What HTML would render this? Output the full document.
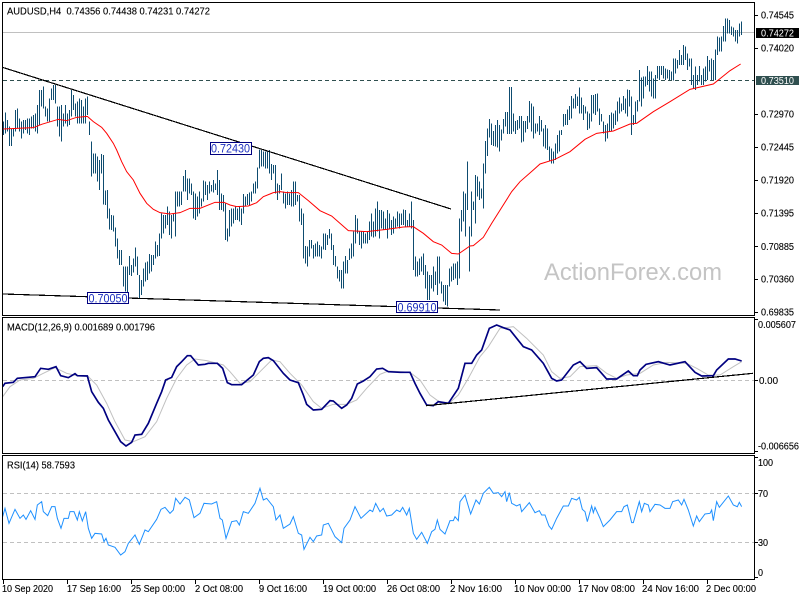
<!DOCTYPE html>
<html><head><meta charset="utf-8"><title>AUDUSD,H4</title>
<style>
html,body{margin:0;padding:0;background:#fff;width:800px;height:600px;overflow:hidden}
svg{display:block}
text{font-family:"Liberation Sans",sans-serif;font-size:10px;fill:#000;stroke:#000;stroke-width:.12}
.bars{fill:none;stroke:#0e4c70;stroke-width:3;shape-rendering:crispEdges}
.red{fill:none;stroke:#f00;stroke-width:3}
.macd{fill:none;stroke:#000080;stroke-width:5}
.sig{fill:none;stroke:#c0c0c0;stroke-width:3}
.rsi{fill:none;stroke:#1e90ff;stroke-width:3}
.f{stroke:#000;stroke-width:1;shape-rendering:crispEdges;fill:none}
.tl{stroke:#000;stroke-width:1.2;fill:none;shape-rendering:crispEdges}
text.lab{fill:#1c30c0;font-size:11.5px;stroke:none}
.box{fill:#fff;stroke:#000080;stroke-width:1;shape-rendering:crispEdges}
</style></head><body>
<svg xmlns="http://www.w3.org/2000/svg" width="800" height="600" viewBox="0 0 800 600">
<rect width="800" height="600" fill="#fff"/>

<!-- price line and dashed level -->
<path d="M3 32.5H754" stroke="#c0c0c0" stroke-width="1" shape-rendering="crispEdges"/>
<path d="M3 80.5H754" stroke="#2f4f4f" stroke-width="1" stroke-dasharray="4 3" shape-rendering="crispEdges"/>

<!-- bars -->
<g transform="translate(0,0) scale(.33333)"><path class="bars" d="M10 365V405M16 338V400M22 360V395M28 380V438M34 385V438M40 385V410M46 330V395M52 325V385M58 355V395M64 365V415M70 360V400M76 360V390M82 355V400M88 355V405M94 350V385M100 345V385M106 340V395M112 315V400M118 270V375M124 270V320M130 260V325M136 320V350M142 325V365M148 295V365M154 265V300M160 255V300M166 255V310M172 320V380M178 320V410M184 315V425M190 340V380M196 315V370M202 340V380M208 330V375M214 270V350M220 285V330M226 310V350M232 305V370M238 295V370M244 300V370M250 320V370M256 295V370M262 290V345M268 365V405M274 425V480M280 465V490M286 460V490M292 470V500M298 480V520M304 462V490M778 448V480M784 450V480M790 455V480M796 458V480M802 455V480M808 458V490"/></g>
<g transform="translate(0,150) scale(.33333)"><path class="bars" d="M274 0V80M280 10V70M286 10V70M292 20V95M298 35V120M304 12V70M310 15V163M316 122V165M322 120V205M328 175V238M334 195V240M340 197V245M346 232V290M352 265V325M358 300V345M364 300V345M370 350V410M376 350V425M382 350V430M388 318V375M394 345V378M400 325V368M406 292V350M412 320V375M418 375V445M424 390V435M430 355V410M436 338V395M442 335V390M448 312V370M454 315V365M460 315V345M466 275V325M472 285V320M478 250V318M484 190V265M490 195V250M496 195V235M502 170V225M508 185V255M514 195V265M520 190V215M526 125V260M532 125V170M538 125V170M544 125V165M550 78V125M556 60V125M562 85V150M568 85V130M574 100V135M580 125V205M586 130V210M592 140V200M598 125V190M604 145V170M610 92V155M616 95V135M622 105V150M628 95V130M634 105V125M640 90V128M646 100V120M652 60V135M658 90V180M664 130V180M670 135V185M676 160V270M682 235V275M688 180V260M694 175V230M700 175V220M706 170V210M712 175V210M718 170V215M724 175V225M730 132V190M736 140V170M742 132V165M748 128V165M754 125V155M760 100V130M766 95V130M772 52V115M778 0V55M784 0V50M790 5V50M796 5V55M802 10V55M808 0V70"/></g>
<g transform="translate(270,150) scale(.33333)"><path class="bars" d="M4 42V90M10 45V70M16 45V130M22 100V150M28 105V130M34 70V120M40 125V160M46 130V175M52 125V165M58 130V165M64 120V170M70 95V170M76 95V165M82 135V155M88 135V215M94 175V225M100 190V325M106 288V340M112 290V350M118 270V320M124 270V295M130 285V325M136 280V320M142 275V320M148 285V320M154 290V325M160 250V298M166 250V300M172 255V285M178 237V265M184 250V300M190 285V345M196 318V350M202 350V385M208 360V395M214 360V415M220 335V415M226 318V370M232 330V370M238 295V330M244 280V325M250 245V320M256 195V280M262 205V250M268 245V285M274 245V295M280 245V280M286 250V280M292 245V280M298 215V270M304 190V260M310 215V262M316 175V260M322 155V245M328 180V265M334 180V235M340 185V240M346 205V240M352 180V265M358 190V235M364 210V255M370 200V250M376 205V235M382 185V230M388 190V235M394 190V225M400 178V225M406 180V230M412 210V230M418 190V230M424 155V235M430 210V360M436 320V380M442 335V380M448 325V375M454 320V365M460 310V375M466 345V415M472 365V450M478 375V450M484 375V415M490 350V425M496 365V405M502 320V435M508 320V400M514 395V430M520 405V455M526 405V465M532 405V470M538 355V410M544 350V395M550 340V390M556 340V385M562 335V405M568 205V385M574 180V245M580 125V215M586 130V260M592 35V180M598 230V365M604 125V260M610 155V180M616 75V220M622 80V140M628 95V150M634 115V145M640 40V175M646 0V70"/></g>
<g transform="translate(270,0) scale(.33333)"><path class="bars" d="M646 423V480M652 385V468M658 357V413M664 370V435M670 393V438M676 375V440M682 360V443M688 375V455M694 388V422M700 357V400M706 336V380M712 336V402M718 261V402M724 261V402M730 340V395M736 363V402M742 360V390M748 348V385M754 348V428M760 363V425M766 363V398M772 348V387M778 303V368"/></g>
<g transform="translate(530,0) scale(.33333)"><path class="bars" d="M4 310V395M10 320V415M16 370V400M22 370V395M28 348V405M34 360V395M40 385V440M46 375V445M52 385V450M58 440V485M64 445V490M70 455V490M76 430V480M82 405V460M88 392V455M94 390V405M100 342V380M106 342V375M112 328V375M118 318V360M124 288V355M130 295V325M136 282V325M142 290V318M148 262V340M154 292V340M160 315V360M166 320V340M172 335V390M178 340V385M184 285V365M190 285V340M196 282V345M202 280V335M208 325V375M214 342V365M220 365V400M226 375V425M232 370V415M238 345V395M244 338V395M250 340V385M256 332V375M262 305V365M268 292V340M274 310V335M280 288V330M286 295V340M292 268V350M298 270V320M304 290V405M310 345V375M316 305V370M322 300V335M328 210V305M334 232V320M340 230V295M346 230V260M352 198V255M358 215V275M364 215V290M370 235V295M376 225V295M382 198V235M388 198V240M394 198V225M400 198V235M406 205V240M412 208V235M418 210V240M424 215V240M430 175V242M436 175V220M442 180V205M448 150V195M454 165V195M460 135V195M466 140V180M472 160V210M478 175V200M484 175V255M490 225V265M496 200V270M502 225V255M508 198V245M514 225V255M520 205V255M526 200V245M532 168V240M538 180V215M544 175V240M550 180V240M556 148V240M562 110V165M568 112V155M574 110V155M580 78V125M586 55V125M592 55V100M598 60V100M604 80V105M610 82V110M616 90V125M622 90V130M628 70V110M634 65V105"/></g>

<!-- moving average -->
<g transform="scale(.33333)"><polyline class="red" points="10,387 50,385 100,383 125,373 175,358 200,362 230,352 262,349 280,365 305,382 320,400 340,430 350,450 365,485 380,515 400,540 420,580 440,610 460,628 480,638 510,642 540,638 570,625 600,625 645,607 672,607 690,615 710,620 745,618 770,608 790,590 810,582 820,578 840,575 860,578 895,578 925,602 960,632 995,648 1045,692 1100,695 1160,688 1210,681 1240,680 1270,700 1300,725 1325,735 1355,760 1375,762 1410,738 1420,737 1450,712 1475,670 1535,575 1560,545 1600,510 1620,492 1665,478 1710,455 1755,418 1790,400 1840,393 1890,372 1910,370 1960,335 2010,305 2070,268 2140,252 2190,212 2222,192"/></g>

<!-- trendlines -->
<path class="tl" d="M3 67.5L451 209"/>
<path class="tl" d="M3 294L500 310"/>

<!-- price text boxes -->
<rect class="box" x="210.5" y="142.5" width="41" height="12"/>
<text class="lab" x="211" y="152.5" textLength="39" lengthAdjust="spacingAndGlyphs">0.72430</text>
<rect class="box" x="87.5" y="292.5" width="41" height="11"/>
<text class="lab" x="88.5" y="302.5" textLength="39" lengthAdjust="spacingAndGlyphs">0.70050</text>
<rect class="box" x="396.5" y="301.5" width="41" height="11"/>
<text class="lab" x="397.5" y="311.5" textLength="39" lengthAdjust="spacingAndGlyphs">0.69910</text>

<!-- watermark -->
<text x="544" y="280" textLength="178" lengthAdjust="spacingAndGlyphs" style="font-size:24px;fill:#c4c4c4;stroke:none">ActionForex.com</text>

<!-- MACD -->
<path d="M3 380.5H754" stroke="#c0c0c0" stroke-width="1" stroke-dasharray="4 3" shape-rendering="crispEdges"/>
<g transform="translate(0,315) scale(.33333)">
<polyline class="sig" points="8,245 30,215 60,195 100,190 130,175 165,158 200,175 230,182 262,182 290,210 320,265 345,320 375,375 400,380 435,365 470,320 500,250 530,190 560,150 585,132 620,137 670,150 690,170 720,205 750,200 780,170 815,135 840,140 870,175 905,210 940,260 965,280 1000,268 1040,268 1070,255 1100,220 1140,178 1165,168 1200,170 1230,172 1260,195 1290,240 1320,262 1350,262 1375,240 1405,190 1440,125 1465,95 1500,40 1540,35 1580,70 1630,120 1655,170 1680,190 1710,185 1740,155 1790,152 1820,175 1850,190 1880,180 1920,175 1960,150 2000,142 2060,145 2090,160 2125,180 2160,180 2200,155 2225,140"/>
<polyline class="macd" points="8,215 15,205 40,202 52,190 105,185 122,160 145,163 168,155 182,182 205,188 225,176 232,182 262,183 275,230 295,262 310,280 325,315 345,350 362,380 378,393 395,382 405,360 425,358 445,325 470,265 485,230 497,195 515,187 530,155 545,140 562,122 572,122 595,150 615,148 625,145 652,145 668,160 682,203 695,209 725,209 760,180 778,140 790,130 805,128 820,137 850,175 870,195 895,203 910,240 920,268 940,285 965,283 990,257 1000,258 1025,280 1040,270 1055,250 1072,207 1090,198 1110,185 1130,162 1148,160 1165,170 1200,172 1230,172 1245,205 1260,235 1280,270 1300,272 1315,260 1345,265 1375,220 1395,145 1415,145 1430,120 1445,105 1468,40 1490,30 1510,38 1530,45 1570,95 1595,105 1630,145 1655,190 1670,198 1685,195 1720,150 1740,140 1760,160 1790,158 1820,192 1850,192 1885,168 1900,182 1912,182 1920,165 1938,148 1975,140 2010,150 2055,140 2085,172 2105,183 2140,182 2150,165 2185,132 2205,132 2225,138"/>
</g>
<path class="tl" d="M426 405.7L753 373.3"/>

<!-- RSI -->
<path d="M3 493.5H754M3 542.5H754" stroke="#c0c0c0" stroke-width="1" stroke-dasharray="4 3" shape-rendering="crispEdges"/>
<g transform="translate(0,450) scale(.33333)"><polyline class="rsi" points="8,200 15,175 27,220 45,178 60,205 70,195 78,208 92,182 105,208 112,165 125,155 130,185 143,197 155,170 165,170 172,205 183,235 192,205 205,205 210,185 222,185 232,210 238,185 247,213 257,185 265,235 275,265 285,250 305,252 312,275 318,265 325,285 345,292 362,315 375,305 385,280 405,255 418,283 435,240 445,245 470,208 483,178 495,172 510,190 520,180 527,145 540,162 555,142 568,150 582,203 600,190 612,160 635,162 650,155 660,205 667,210 678,265 695,215 710,212 718,225 730,185 745,190 765,160 780,115 790,150 800,145 820,170 828,210 840,195 850,235 870,222 880,200 895,250 905,255 912,298 930,262 940,275 950,258 965,255 970,225 985,220 1005,260 1025,278 1032,235 1050,210 1065,170 1083,205 1110,180 1118,185 1127,160 1140,185 1150,175 1160,198 1175,195 1190,180 1200,185 1208,172 1220,195 1228,175 1240,250 1250,268 1265,247 1282,280 1295,245 1305,238 1312,210 1320,238 1335,252 1350,212 1360,212 1365,200 1375,212 1380,155 1395,135 1412,192 1428,150 1438,162 1450,130 1468,112 1480,130 1495,128 1505,140 1515,125 1520,155 1528,128 1535,160 1550,168 1560,163 1565,185 1588,158 1605,188 1618,182 1625,195 1635,195 1647,228 1655,238 1670,205 1690,168 1705,168 1715,145 1730,150 1738,142 1747,178 1755,185 1762,215 1775,168 1780,188 1785,172 1800,205 1810,230 1830,210 1850,185 1865,185 1872,170 1882,165 1895,218 1900,218 1918,155 1925,185 1933,160 1945,165 1950,185 1965,163 1980,165 1995,175 2010,175 2018,155 2035,150 2045,165 2052,148 2065,180 2080,228 2090,198 2098,215 2115,192 2130,190 2135,180 2140,212 2150,155 2158,172 2185,138 2200,165 2212,170 2218,157 2225,170"/></g>

<!-- frames -->
<path class="f" d="M2.5 2.5H754.5V315.5H2.5ZM2.5 317.5H754.5V453.5H2.5ZM2.5 455.5H754.5V579.5H2.5Z"/>
<!-- ticks -->
<path class="f" d="M755 15.5H758M755 48.5H758M755 114.5H758M755 147.5H758M755 180.5H758M755 213.5H758M755 246.5H758M755 279.5H758M755 312.5H758M755 319.5H758M755 380.5H758M755 451.5H758M755 457.5H758M755 493.5H758M755 542.5H758M755 577.5H758M3.5 580V584M67.5 580V584M131.5 580V584M195.5 580V584M259.5 580V584M323.5 580V584M387.5 580V584M451.5 580V584M515.5 580V584M579.5 580V584M643.5 580V584M707.5 580V584"/>

<!-- titles -->
<text x="7" y="14.5" textLength="203" lengthAdjust="spacingAndGlyphs" xml:space="preserve">AUDUSD,H4  0.74356 0.74438 0.74231 0.74272</text>
<text x="7" y="330.5" textLength="148" lengthAdjust="spacingAndGlyphs">MACD(12,26,9) 0.001689 0.001796</text>
<text x="7" y="468.5" textLength="68" lengthAdjust="spacingAndGlyphs">RSI(14) 58.7593</text>

<!-- price scale -->
<rect x="756" y="28" width="43" height="10" fill="#000"/>
<rect x="756" y="76" width="43" height="9" fill="#2f4f4f"/>
<g>
<text x="761" y="18.5" textLength="33" lengthAdjust="spacingAndGlyphs">0.74545</text>
<text x="761" y="36.5" textLength="33" lengthAdjust="spacingAndGlyphs" style="fill:#fff;stroke:none">0.74272</text>
<text x="761" y="51.5" textLength="33" lengthAdjust="spacingAndGlyphs">0.74020</text>
<text x="761" y="84" textLength="33" lengthAdjust="spacingAndGlyphs" style="fill:#fff;stroke:none">0.73510</text>
<text x="761" y="117.5" textLength="33" lengthAdjust="spacingAndGlyphs">0.72970</text>
<text x="761" y="150.5" textLength="33" lengthAdjust="spacingAndGlyphs">0.72445</text>
<text x="761" y="183.5" textLength="33" lengthAdjust="spacingAndGlyphs">0.71920</text>
<text x="761" y="216.5" textLength="33" lengthAdjust="spacingAndGlyphs">0.71395</text>
<text x="761" y="250" textLength="33" lengthAdjust="spacingAndGlyphs">0.70885</text>
<text x="761" y="282.5" textLength="33" lengthAdjust="spacingAndGlyphs">0.70360</text>
<text x="761" y="315.5" textLength="33" lengthAdjust="spacingAndGlyphs">0.69835</text>
<text x="758" y="328" textLength="38" lengthAdjust="spacingAndGlyphs">0.005607</text>
<text x="759" y="384" textLength="19" lengthAdjust="spacingAndGlyphs">0.00</text>
<text x="758" y="449.5" textLength="41" lengthAdjust="spacingAndGlyphs">-0.006656</text>
<text x="758" y="466" textLength="15" lengthAdjust="spacingAndGlyphs">100</text>
<text x="758" y="497" textLength="10" lengthAdjust="spacingAndGlyphs">70</text>
<text x="758" y="546" textLength="10" lengthAdjust="spacingAndGlyphs">30</text>
<text x="758" y="576" textLength="5" lengthAdjust="spacingAndGlyphs">0</text>
</g>

<!-- time scale -->
<g>
<text x="2" y="592" textLength="51" lengthAdjust="spacingAndGlyphs">10 Sep 2020</text>
<text x="67" y="592" textLength="54" lengthAdjust="spacingAndGlyphs">17 Sep 16:00</text>
<text x="131" y="592" textLength="54" lengthAdjust="spacingAndGlyphs">25 Sep 00:00</text>
<text x="195" y="592" textLength="48" lengthAdjust="spacingAndGlyphs">2 Oct 08:00</text>
<text x="259" y="592" textLength="48" lengthAdjust="spacingAndGlyphs">9 Oct 16:00</text>
<text x="323" y="592" textLength="53" lengthAdjust="spacingAndGlyphs">19 Oct 00:00</text>
<text x="387" y="592" textLength="53" lengthAdjust="spacingAndGlyphs">26 Oct 08:00</text>
<text x="450" y="592" textLength="52" lengthAdjust="spacingAndGlyphs">2 Nov 16:00</text>
<text x="514" y="592" textLength="57" lengthAdjust="spacingAndGlyphs">10 Nov 00:00</text>
<text x="578" y="592" textLength="57" lengthAdjust="spacingAndGlyphs">17 Nov 08:00</text>
<text x="642" y="592" textLength="57" lengthAdjust="spacingAndGlyphs">24 Nov 16:00</text>
<text x="706" y="592" textLength="50" lengthAdjust="spacingAndGlyphs">2 Dec 00:00</text>
</g>
</svg>
</body></html>
